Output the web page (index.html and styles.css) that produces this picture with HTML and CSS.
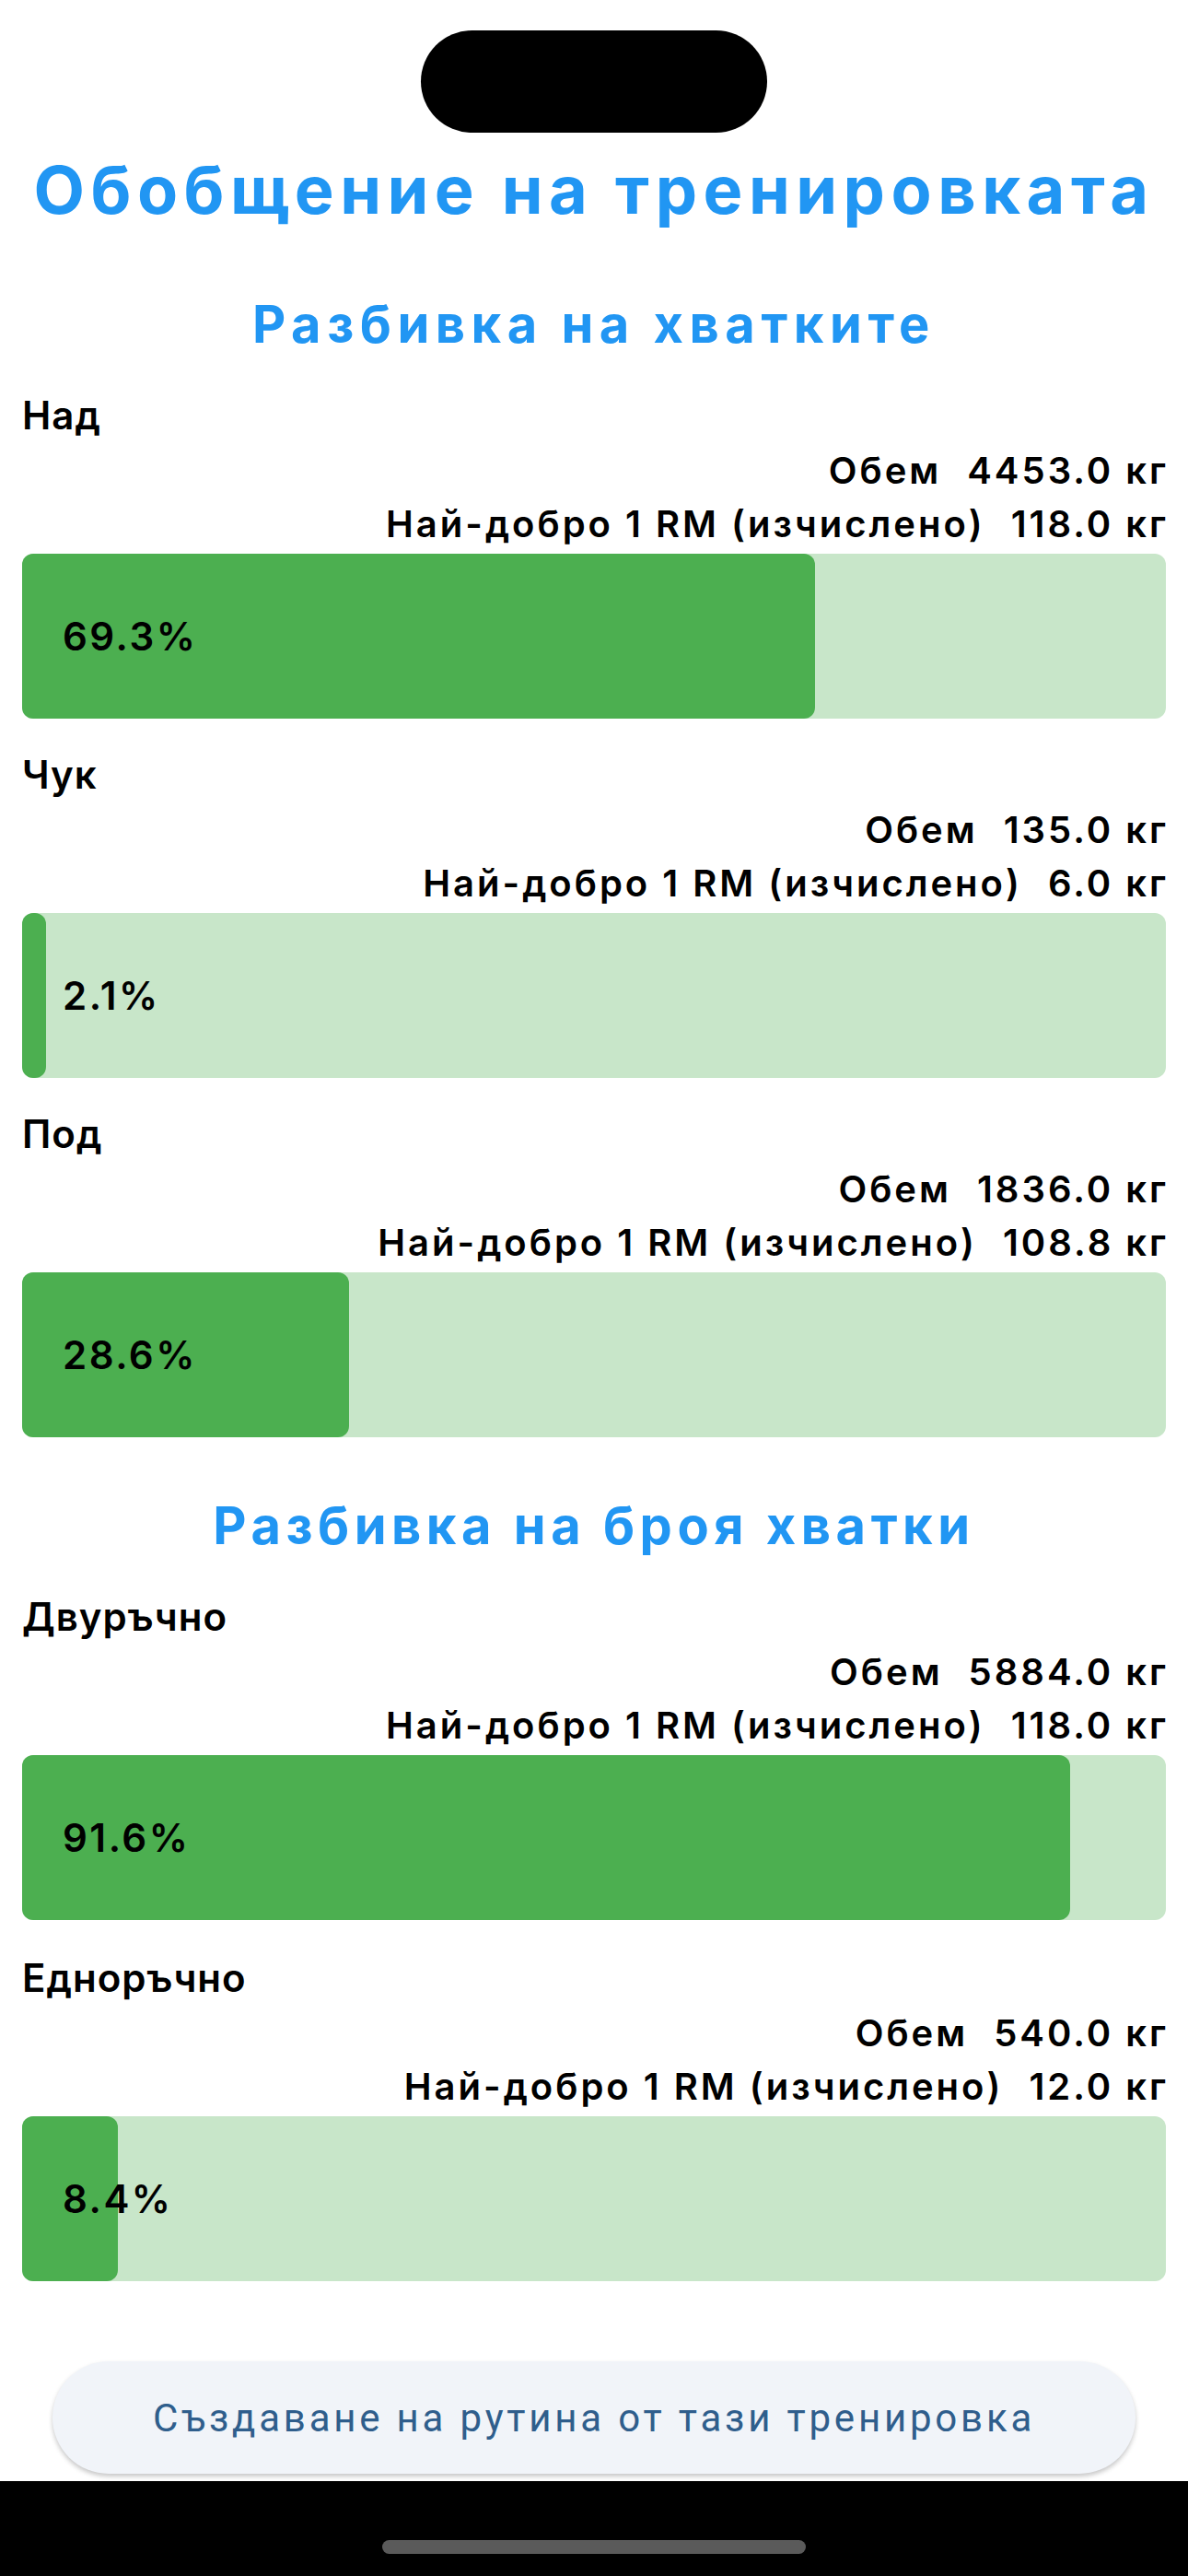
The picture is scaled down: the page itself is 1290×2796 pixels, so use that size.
FILE: index.html
```html
<!DOCTYPE html>
<html lang="bg">
<head>
<meta charset="utf-8">
<title>Обобщение на тренировката</title>
<link rel="stylesheet" href="styles.css">
</head>
<body>
<div class="screen">
  <div class="top">
    <div class="island"></div>
  </div>
  <main class="content">
    <h1 class="title">Обобщение на тренировката</h1>

    <h2 class="section section-1">Разбивка на хватките</h2>
    <div class="items">
      <div class="item">
        <div class="label">Над</div>
        <div class="stats">
          <div class="row"><span>Обем</span><span>4453.0 кг</span></div>
          <div class="row"><span>Най-добро 1 RM (изчислено)</span><span>118.0 кг</span></div>
        </div>
        <div class="bar"><div class="fill" style="width:69.3%"></div><span class="pct">69.3%</span></div>
      </div>
      <div class="item">
        <div class="label">Чук</div>
        <div class="stats">
          <div class="row"><span>Обем</span><span>135.0 кг</span></div>
          <div class="row"><span>Най-добро 1 RM (изчислено)</span><span>6.0 кг</span></div>
        </div>
        <div class="bar"><div class="fill" style="width:2.1%"></div><span class="pct">2.1%</span></div>
      </div>
      <div class="item">
        <div class="label">Под</div>
        <div class="stats">
          <div class="row"><span>Обем</span><span>1836.0 кг</span></div>
          <div class="row"><span>Най-добро 1 RM (изчислено)</span><span>108.8 кг</span></div>
        </div>
        <div class="bar"><div class="fill" style="width:28.6%"></div><span class="pct">28.6%</span></div>
      </div>
    </div>

    <h2 class="section section-2">Разбивка на броя хватки</h2>
    <div class="items items-2">
      <div class="item">
        <div class="label">Двуръчно</div>
        <div class="stats">
          <div class="row"><span>Обем</span><span>5884.0 кг</span></div>
          <div class="row"><span>Най-добро 1 RM (изчислено)</span><span>118.0 кг</span></div>
        </div>
        <div class="bar"><div class="fill" style="width:91.6%"></div><span class="pct">91.6%</span></div>
      </div>
      <div class="item">
        <div class="label">Едноръчно</div>
        <div class="stats">
          <div class="row"><span>Обем</span><span>540.0 кг</span></div>
          <div class="row"><span>Най-добро 1 RM (изчислено)</span><span>12.0 кг</span></div>
        </div>
        <div class="bar"><div class="fill" style="width:8.4%"></div><span class="pct">8.4%</span></div>
      </div>
    </div>
  </main>
  <div class="actions">
    <button class="create-btn">Създаване на рутина от тази тренировка</button>
  </div>
  <footer class="home-area">
    <div class="home-indicator"></div>
  </footer>
</div>
</body>
</html>
```
FILE: styles.css
```css
* { box-sizing: border-box; }
html, body { margin: 0; padding: 0; background: #ffffff; }
body {
  font-family: Inter, "Noto Sans", "Liberation Sans", sans-serif;
  color: #000;
}
.screen {
  min-height: 100vh;
  display: flex;
  flex-direction: column;
}
.top {
  display: flex;
  justify-content: center;
  padding-top: 33px;
}
.island {
  width: 376px;
  height: 111px;
  border-radius: 56px;
  background: #000;
}
.content {
  flex: 1;
  padding: 0 24px;
}
.title {
  margin: 19px 0 0;
  font-size: 72px;
  line-height: 86px;
  font-weight: 700;
  letter-spacing: 6.5px;
  color: #2196F3;
  text-align: center;
  white-space: nowrap;
}
.section {
  margin: 69px 0 0;
  font-size: 56px;
  line-height: 68px;
  font-weight: 700;
  color: #2196F3;
  text-align: center;
}
.section-1 { letter-spacing: 6.5px; }
.section-2 { margin-top: 62px; letter-spacing: 5.5px; }
.items {
  display: flex;
  flex-direction: column;
  gap: 36px;
  margin-top: 40px;
}
.items-2 { gap: 38px; }
.label {
  font-size: 42px;
  line-height: 50px;
  font-weight: 600;
  letter-spacing: 1px;
  margin-bottom: 6px;
}
.stats {
  display: flex;
  flex-direction: column;
  align-items: flex-end;
  margin-bottom: 3px;
}
.row {
  display: flex;
  gap: 28px;
  font-size: 40px;
  line-height: 58px;
  font-weight: 600;
  letter-spacing: 3px;
  margin-right: -3px;
}
.bar {
  position: relative;
  height: 179px;
  border-radius: 12px;
  background: #C8E6C9;
  display: flex;
  align-items: center;
}
.fill {
  position: absolute;
  left: 0;
  top: 0;
  bottom: 0;
  border-radius: 12px;
  background: #4CAF50;
}
.pct {
  position: relative;
  padding-left: 44px;
  font-size: 42px;
  font-weight: 600;
  letter-spacing: 2.5px;
}
.actions {
  padding: 0 57px 8px;
}
.create-btn {
  width: 100%;
  height: 122px;
  border: none;
  border-radius: 61px;
  background: #F1F4F9;
  box-shadow: 0 3px 5px rgba(0, 0, 0, 0.22);
  font-family: Roboto, "Noto Sans", sans-serif;
  font-size: 42px;
  font-weight: 400;
  letter-spacing: 3.8px;
  color: #2F5E8C;
  padding: 0;
}
.home-area {
  height: 103px;
  background: #000;
  display: flex;
  justify-content: center;
  padding-top: 64px;
}
.home-indicator {
  width: 460px;
  height: 15px;
  border-radius: 8px;
  background: #5A5A5A;
}
```
